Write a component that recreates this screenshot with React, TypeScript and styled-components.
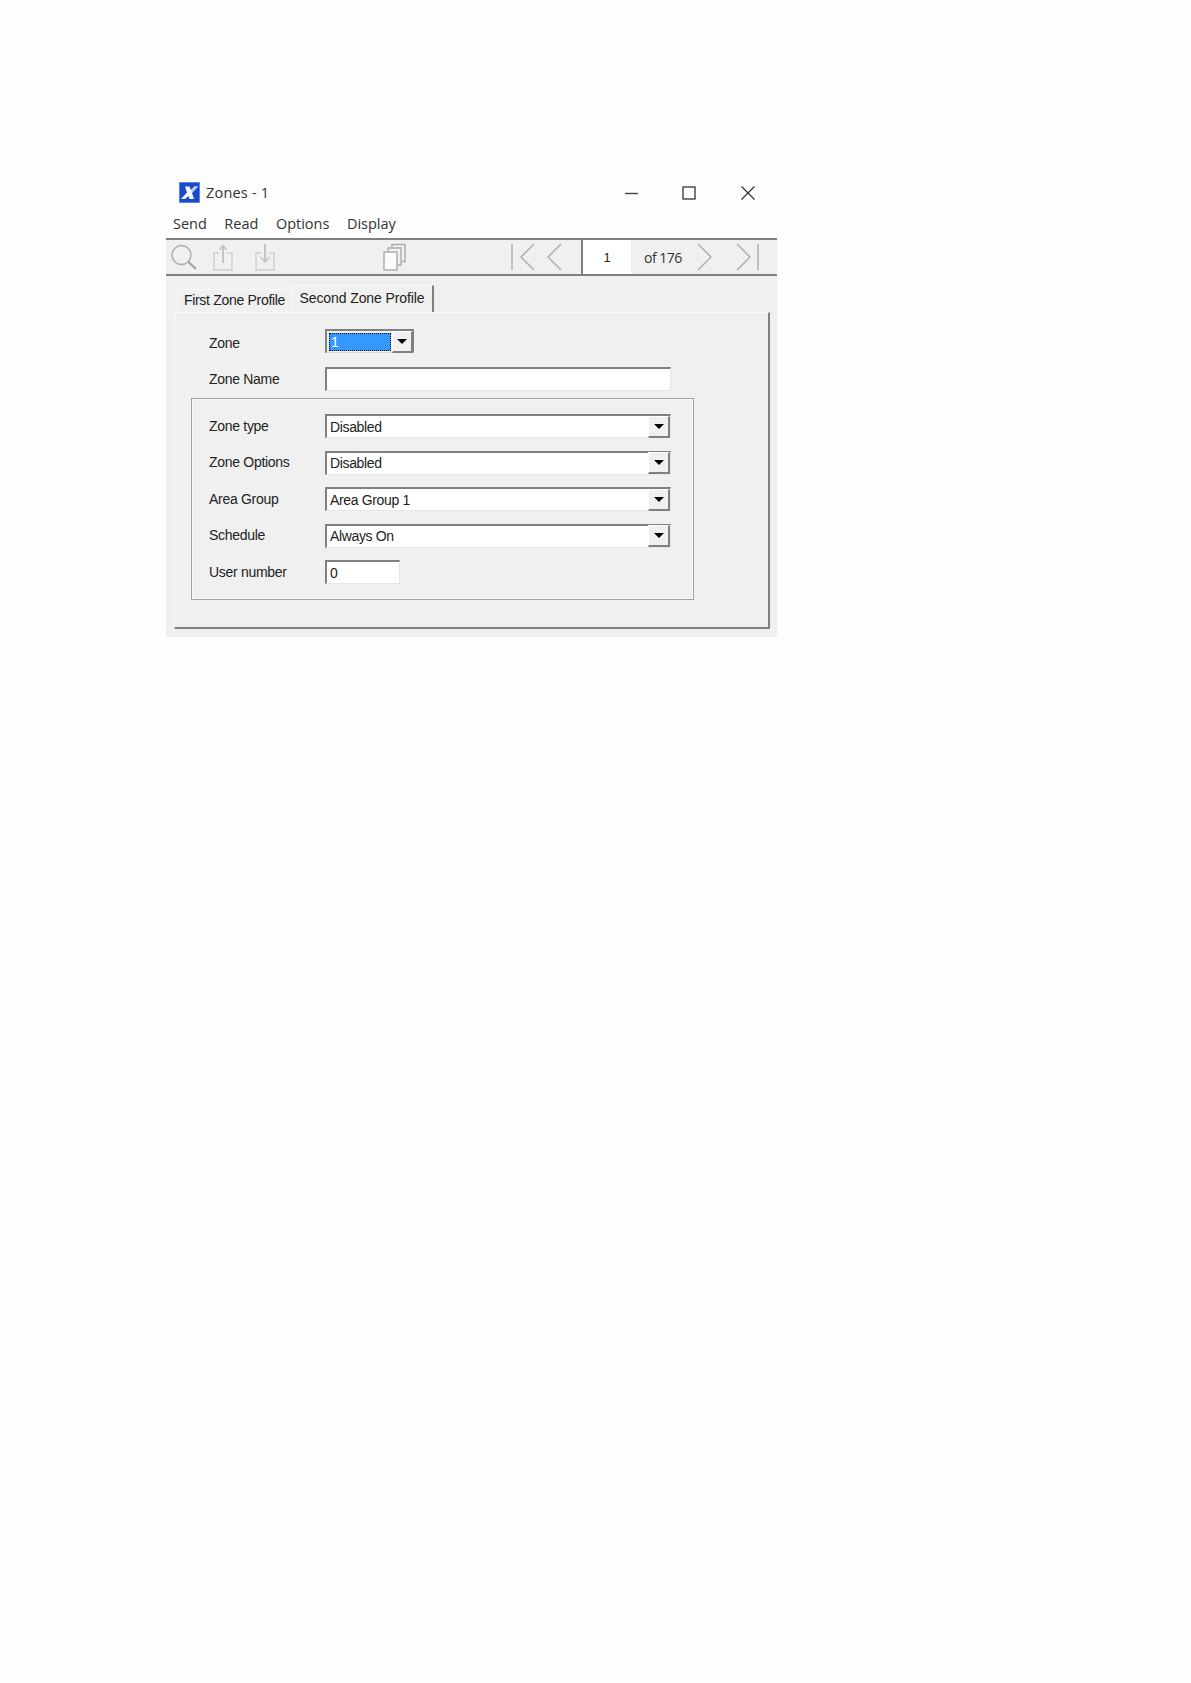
import React from "react";
import styled, { createGlobalStyle } from "styled-components";

const Global = createGlobalStyle`
  html, body { margin: 0; padding: 0; background: #fdfdfd; }
  * { box-sizing: border-box; }
`;

const Page = styled.div`
  width: 1191px;
  height: 1683px;
  padding: 176px 0 0 166px;
  background: #fdfdfd;
  overflow: hidden;
`;
const Window = styled.div`
  width: 611px;
  font-family: "Open Sans", "Noto Sans", sans-serif;
  color: #222;
`;
const TitleBar = styled.div`
  height: 33px;
  display: flex;
  align-items: center;
  padding-left: 13px;
  font-size: 14.5px;
  color: #333;
`;
const TitleText = styled.span`
  margin-left: 6px;
  flex: 1;
  letter-spacing: 0.2px;
`;
const WinControls = styled.div`
  display: flex;
  align-items: center;
  margin-right: 22px;
  gap: 43px;
  svg { display: block; }
`;
const CloseSlot = styled.div`
  margin-left: 2px;
`;
const MenuBar = styled.div`
  height: 29px;
  display: flex;
  align-items: center;
  padding: 0 0 1px 7px;
  gap: 17.500px;
  font-size: 14.5px;
  color: #333;
`;
const Toolbar = styled.div`
  height: 38px;
  background: #f0f0f0;
  border-top: 2px solid #808080;
  border-bottom: 2px solid #808080;
  display: flex;
  align-items: center;
  position: relative;
`;
const ToolSlot = styled.div<{ $left: number }>`
  margin-left: ${(p) => p.$left}px;
  display: flex;
  svg { display: block; }
`;
const PageBox = styled.div`
  margin-left: 19px;
  width: 50px;
  align-self: stretch;
  background: #fff;
  border-left: 2px solid #808080;
  display: flex;
  align-items: center;
  justify-content: center;
  font: 13px "Liberation Sans", sans-serif;
  color: #222;
`;
const OfText = styled.div`
  margin-left: 13px;
  width: 42px;
  font-size: 14px;
  letter-spacing: -0.5px;
  white-space: nowrap;
  color: #333;
`;
const Body = styled.div`
  background: #f0f0f0;
  height: 361px;
  padding: 9px 7px 8px 8px;
  display: flex;
  flex-direction: column;
`;
const Tabs = styled.div`
  display: flex;
  align-items: flex-end;
  padding-left: 3px;
  height: 27px;
  font-family: "Liberation Sans", sans-serif;
`;
const Tab = styled.div<{ $active?: boolean }>`
  height: ${(p) => (p.$active ? 27 : 23)}px;
  width: ${(p) => (p.$active ? 143 : 114)}px;
  display: flex;
  align-items: center;
  justify-content: center;
  padding-bottom: ${(p) => (p.$active ? 3 : 2)}px;
  font-size: 14px;
  letter-spacing: ${(p) => (p.$active ? "-0.1px" : "-0.3px")};
  color: #222;
  background: #f0f0f0;
  border-top: 1px solid #fafafa;
  border-left: 1px solid #fafafa;
  border-right: ${(p) => (p.$active ? "2px solid #808080" : "none")};
`;
const Panel = styled.div`
  flex: 1;
  border-top: 1px solid #fafafa;
  border-left: 1px solid #fafafa;
  border-right: 2px solid #808080;
  border-bottom: 2px solid #808080;
  padding: 16px 0 0 34px;
`;
const Row = styled.div<{ $mt?: number }>`
  display: flex;
  align-items: center;
  height: 24px;
  margin-top: ${(p) => p.$mt ?? 0}px;
`;
const Label = styled.div<{ $top: number }>`
  width: 116px;
  font: 14px "Liberation Sans", sans-serif;
  letter-spacing: -0.3px;
  color: #222;
  position: relative;
  top: ${(p) => p.$top}px;
`;
const Sunken = styled.div<{ $w: number }>`
  width: ${(p) => p.$w}px;
  height: 24px;
  background: #fff;
  border-top: 2px solid #808080;
  border-left: 2px solid #808080;
  border-right: 1px solid #e6e6e6;
  border-bottom: 1px solid #e6e6e6;
  display: flex;
  align-items: center;
  font: 14px "Liberation Sans", sans-serif;
  letter-spacing: -0.35px;
  color: #222;
  padding-left: 3px;
  position: relative;
`;
const ComboText = styled.span`
  flex: 1;
`;
const ZoneCombo = styled(Sunken)`
  background: #f0f0f0;
  padding: 0;
  border-right: 1px solid #808080;
  border-bottom: 1px solid #d8d8d8;
`;
const Selected = styled.div`
  width: 62px;
  height: 18px;
  margin-left: 2px;
  background: #3399ff;
  border: 1px dotted #111;
  color: #fff;
  font-size: 14px;
  line-height: 16px;
  padding-left: 1px;
`;
const DropButton = styled.div`
  width: 22px;
  height: 22px;
  margin-left: auto;
  background: #f0f0f0;
  border-right: 2px solid #808080;
  border-bottom: 2px solid #808080;
  border-top: 1px solid #fff;
  border-left: 1px solid #fff;
  display: flex;
  align-items: center;
  justify-content: center;
  &::after {
    content: "";
    width: 0;
    height: 0;
    border-left: 5px solid transparent;
    border-right: 5px solid transparent;
    border-top: 5px solid #000;
  }
`;
const ZoneDrop = styled(DropButton)`
  width: 21px;
`;
const GroupBox = styled.div`
  width: 503px;
  height: 202px;
  margin: 7px 0 0 -18px;
  border: 1px solid #a0a0a0;
  outline: 1px solid #fafafa;
  outline-offset: -2px;
  padding: 15px 0 0 17px;
`;

const Logo = () => (
  <svg width="21" height="21" viewBox="0 0 21 21">
    <rect width="21" height="21" fill="#1c48cc" />
    <rect x="0.5" y="0.5" width="20" height="20" fill="none" stroke="#5b86e6" />
    <path d="M6 4.500h4.500l1.500 3.500 3.500-3.500H19l-6 6.500 2 6h-4.500l-1-3L6 17H2l6-6.500z" fill="#f4f7ff" />
    <path d="M12 8l3.500-3.500H19l-6 6.500z" fill="#b9caf3" />
  </svg>
);
const Minimize = () => (
  <svg width="14" height="14" viewBox="0 0 14 14">
    <path d="M0 7.500h13" stroke="#444" strokeWidth="1.400" />
  </svg>
);
const Maximize = () => (
  <svg width="14" height="14" viewBox="0 0 14 14">
    <rect x="1" y="1" width="12" height="12" fill="none" stroke="#333" strokeWidth="1.300" />
  </svg>
);
const Close = () => (
  <svg width="14" height="14" viewBox="0 0 14 14">
    <path d="M0.500 0.500L13.500 13.500M13.500 0.500L0.500 13.500" stroke="#333" strokeWidth="1.200" />
  </svg>
);
const Search = () => (
  <svg width="28" height="28" viewBox="0 0 28 28" fill="none" stroke="#aeaeae" strokeWidth="1.500">
    <circle cx="11.500" cy="12" r="9.500" />
    <path d="M18.500 19l7.500 7" strokeWidth="2" stroke="#a0a0a0" />
  </svg>
);
const Upload = () => (
  <svg width="20" height="28" viewBox="0 0 20 28" fill="none" stroke="#cfcfcf" strokeWidth="1.400">
    <path d="M6 10H1v17h18V10h-5" />
    <path d="M10 20V3" stroke="#c4c4c4" strokeWidth="2" />
    <path d="M6.500 7L10 2.500 13.500 7" stroke="#c4c4c4" strokeWidth="1.600" />
  </svg>
);
const Download = () => (
  <svg width="20" height="28" viewBox="0 0 20 28" fill="none" stroke="#cfcfcf" strokeWidth="1.400">
    <path d="M6 10H1v17h18V10h-5" />
    <path d="M10 1v17" stroke="#c4c4c4" strokeWidth="2" />
    <path d="M5.500 14l4.500 5 4.500-5" stroke="#c4c4c4" strokeWidth="1.600" />
  </svg>
);
const Copy = () => (
  <svg width="23" height="28" viewBox="0 0 23 28" fill="none" stroke="#aaa" strokeWidth="1.400">
    <path d="M9 4V1.500h13v17h-3" />
    <path d="M5 8V5h13v17h-3" />
    <rect x="1" y="9" width="13" height="18" fill="#fbfbfb" />
  </svg>
);
const First = () => (
  <svg width="24" height="28" viewBox="0 0 24 28" fill="none" stroke="#b0b0b0" strokeWidth="1.500">
    <path d="M1 1v26M23 1L10 14l13 13" />
  </svg>
);
const Prev = () => (
  <svg width="15" height="28" viewBox="0 0 15 28" fill="none" stroke="#b0b0b0" strokeWidth="1.500">
    <path d="M14 1L1 14l13 13" />
  </svg>
);
const Next = () => (
  <svg width="15" height="28" viewBox="0 0 15 28" fill="none" stroke="#b0b0b0" strokeWidth="1.500">
    <path d="M1 1l13 13L1 27" />
  </svg>
);
const Last = () => (
  <svg width="23" height="28" viewBox="0 0 23 28" fill="none" stroke="#b0b0b0" strokeWidth="1.500">
    <path d="M1 1l13 13L1 27M22 1v26" />
  </svg>
);

const Combo = ({ value }: { value: string }) => (
  <Sunken $w={346}>
    <ComboText>{value}</ComboText>
    <DropButton />
  </Sunken>
);

export default function App() {
  return (
    <Page>
      <Global />
      <Window>
        <TitleBar>
          <Logo />
          <TitleText>Zones - 1</TitleText>
          <WinControls>
            <Minimize />
            <Maximize />
            <CloseSlot><Close /></CloseSlot>
          </WinControls>
        </TitleBar>
        <MenuBar>
          <span>Send</span>
          <span>Read</span>
          <span>Options</span>
          <span>Display</span>
        </MenuBar>
        <Toolbar>
          <ToolSlot $left={4}><Search /></ToolSlot>
          <ToolSlot $left={15}><Upload /></ToolSlot>
          <ToolSlot $left={22}><Download /></ToolSlot>
          <ToolSlot $left={108}><Copy /></ToolSlot>
          <ToolSlot $left={105}><First /></ToolSlot>
          <ToolSlot $left={12}><Prev /></ToolSlot>
          <PageBox>1</PageBox>
          <OfText>of 176</OfText>
          <ToolSlot $left={11}><Next /></ToolSlot>
          <ToolSlot $left={24}><Last /></ToolSlot>
        </Toolbar>
        <Body>
          <Tabs>
            <Tab>First Zone Profile</Tab>
            <Tab $active>Second Zone Profile</Tab>
          </Tabs>
          <Panel>
            <Row>
              <Label $top={2}>Zone</Label>
              <ZoneCombo $w={89}>
                <Selected>1</Selected>
                <ZoneDrop />
              </ZoneCombo>
            </Row>
            <Row $mt={14}>
              <Label $top={0}>Zone Name</Label>
              <Sunken $w={346} />
            </Row>
            <GroupBox>
              <Row>
                <Label $top={0}>Zone type</Label>
                <Combo value="Disabled" />
              </Row>
              <Row $mt={12.500}>
                <Label $top={-1}>Zone Options</Label>
                <Combo value="Disabled" />
              </Row>
              <Row $mt={12.500}>
                <Label $top={0}>Area Group</Label>
                <Combo value="Area Group 1" />
              </Row>
              <Row $mt={12.500}>
                <Label $top={-1}>Schedule</Label>
                <Combo value="Always On" />
              </Row>
              <Row $mt={12.500}>
                <Label $top={0}>User number</Label>
                <Sunken $w={75}>0</Sunken>
              </Row>
            </GroupBox>
          </Panel>
        </Body>
      </Window>
    </Page>
  );
}
